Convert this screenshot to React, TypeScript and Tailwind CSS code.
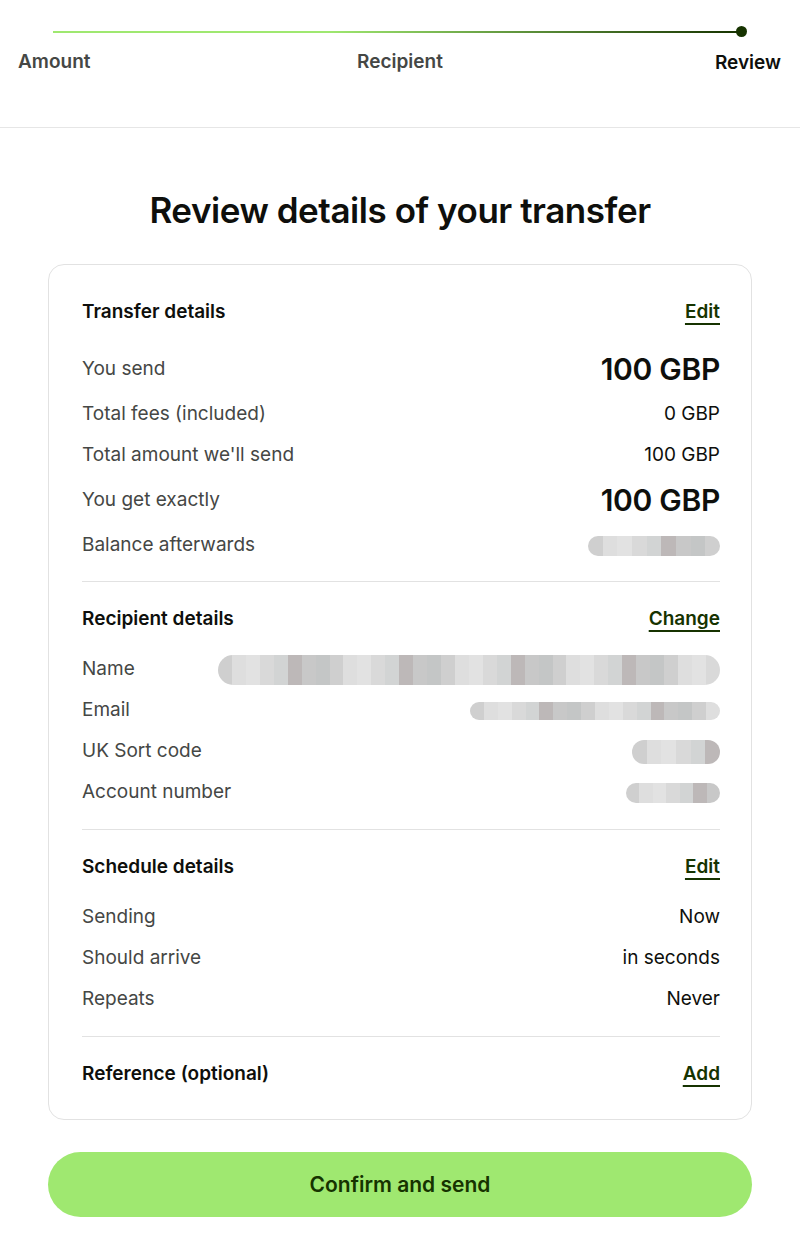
import React from "react";

const font = { fontFamily: "Inter, 'Noto Sans', sans-serif" };

function Blur({ w, h = 18 }: { w: number; h?: number }) {
  const shades = ["#cfcfcf", "#d9d9d9", "#c8c8c8", "#dedede", "#d2d4d4", "#c4c6c6", "#e2e2e2", "#bdb8b8"];
  const n = Math.max(3, Math.round(w / 14));
  return (
    <div className="flex overflow-hidden rounded-full blur-[0.6px]" style={{ width: w, height: h }}>
      {Array.from({ length: n }).map((_, i) => (
        <div key={i} className="flex-1" style={{ background: shades[(i * 3) % shades.length] }} />
      ))}
    </div>
  );
}

function Row({ label, children, tall }: { label: string; children: React.ReactNode; tall?: boolean }) {
  return (
    <div className={`flex items-center justify-between ${tall ? "h-[49px]" : "h-[41px]"}`}>
      <span className="text-[19px] text-[#454745]">{label}</span>
      <div className="text-[19px] text-[#0e0f0c]">{children}</div>
    </div>
  );
}

function Section({
  title,
  action,
  children,
  first,
}: {
  title: string;
  action: string;
  children?: React.ReactNode;
  first?: boolean;
}) {
  return (
    <div className={first ? "pt-[23px] pb-[15px]" : "pt-[23px] pb-[16px]"}>
      <div className="flex items-center justify-between h-[28px]">
        <h3 className="text-[19px] font-semibold text-[#0e0f0c]">{title}</h3>
        <a className="text-[19px] font-semibold text-[#163300] underline underline-offset-[5px] decoration-[1.5px]">
          {action}
        </a>
      </div>
      {children && <div className={first ? "mt-[19px]" : "mt-[16px]"}>{children}</div>}
    </div>
  );
}

export default function App() {
  return (
    <div className="w-[800px] min-h-[1234px] bg-white" style={font}>
      {/* progress */}
      <div className="h-[128px] border-b border-[#e6e6e6]">
        <div className="pt-[26px] px-[53px] flex items-center">
          <div className="h-[2px] flex-1 bg-[linear-gradient(to_right,#9fe870_0%,#9fe870_40%,#163300_100%)]" />
          <div className="w-[11px] h-[11px] rounded-full bg-[#163300] -ml-[4px]" />
        </div>
        <div className="grid grid-cols-3 px-[18px] pt-[11px] text-[19px] font-semibold">
          <span className="text-[#454745]">Amount</span>
          <span className="text-[#454745] text-center">Recipient</span>
          <span className="text-[#0e0f0c] text-right pt-[1px] pr-[1px]">Review</span>
        </div>
      </div>

      <h1 className="text-center text-[35px] font-semibold text-[#0e0f0c] pt-[60px] pb-[32px] leading-[44px] tracking-[-0.45px]">
        Review details of your transfer
      </h1>

      <div className="mx-[48px] border border-[#e2e2e2] rounded-[16px] pl-[33px] pr-[31px] pt-[10px] pb-[15px]">
        <Section title="Transfer details" action="Edit" first>
          <Row label="You send" tall>
            <span className="text-[30px] font-semibold tracking-[-0.3px]">100 GBP</span>
          </Row>
          <Row label="Total fees (included)">0 GBP</Row>
          <Row label="Total amount we'll send">100 GBP</Row>
          <Row label="You get exactly" tall>
            <span className="text-[30px] font-semibold tracking-[-0.3px]">100 GBP</span>
          </Row>
          <Row label="Balance afterwards">
            <Blur w={132} h={20} />
          </Row>
        </Section>
        <div className="h-px bg-[#e2e2e2]" />
        <Section title="Recipient details" action="Change">
          <Row label="Name">
            <Blur w={502} h={30} />
          </Row>
          <Row label="Email">
            <Blur w={250} h={18} />
          </Row>
          <Row label="UK Sort code">
            <Blur w={88} h={24} />
          </Row>
          <Row label="Account number">
            <Blur w={94} h={20} />
          </Row>
        </Section>
        <div className="h-px bg-[#e2e2e2]" />
        <Section title="Schedule details" action="Edit">
          <Row label="Sending">Now</Row>
          <Row label="Should arrive">in seconds</Row>
          <Row label="Repeats">Never</Row>
        </Section>
        <div className="h-px bg-[#e2e2e2]" />
        <Section title="Reference (optional)" action="Add" />
      </div>

      <div className="px-[48px] pt-[32px]">
        <button className="w-full h-[65px] rounded-full bg-[#9fe870] text-[21px] font-semibold text-[#163300]">
          Confirm and send
        </button>
      </div>
    </div>
  );
}
